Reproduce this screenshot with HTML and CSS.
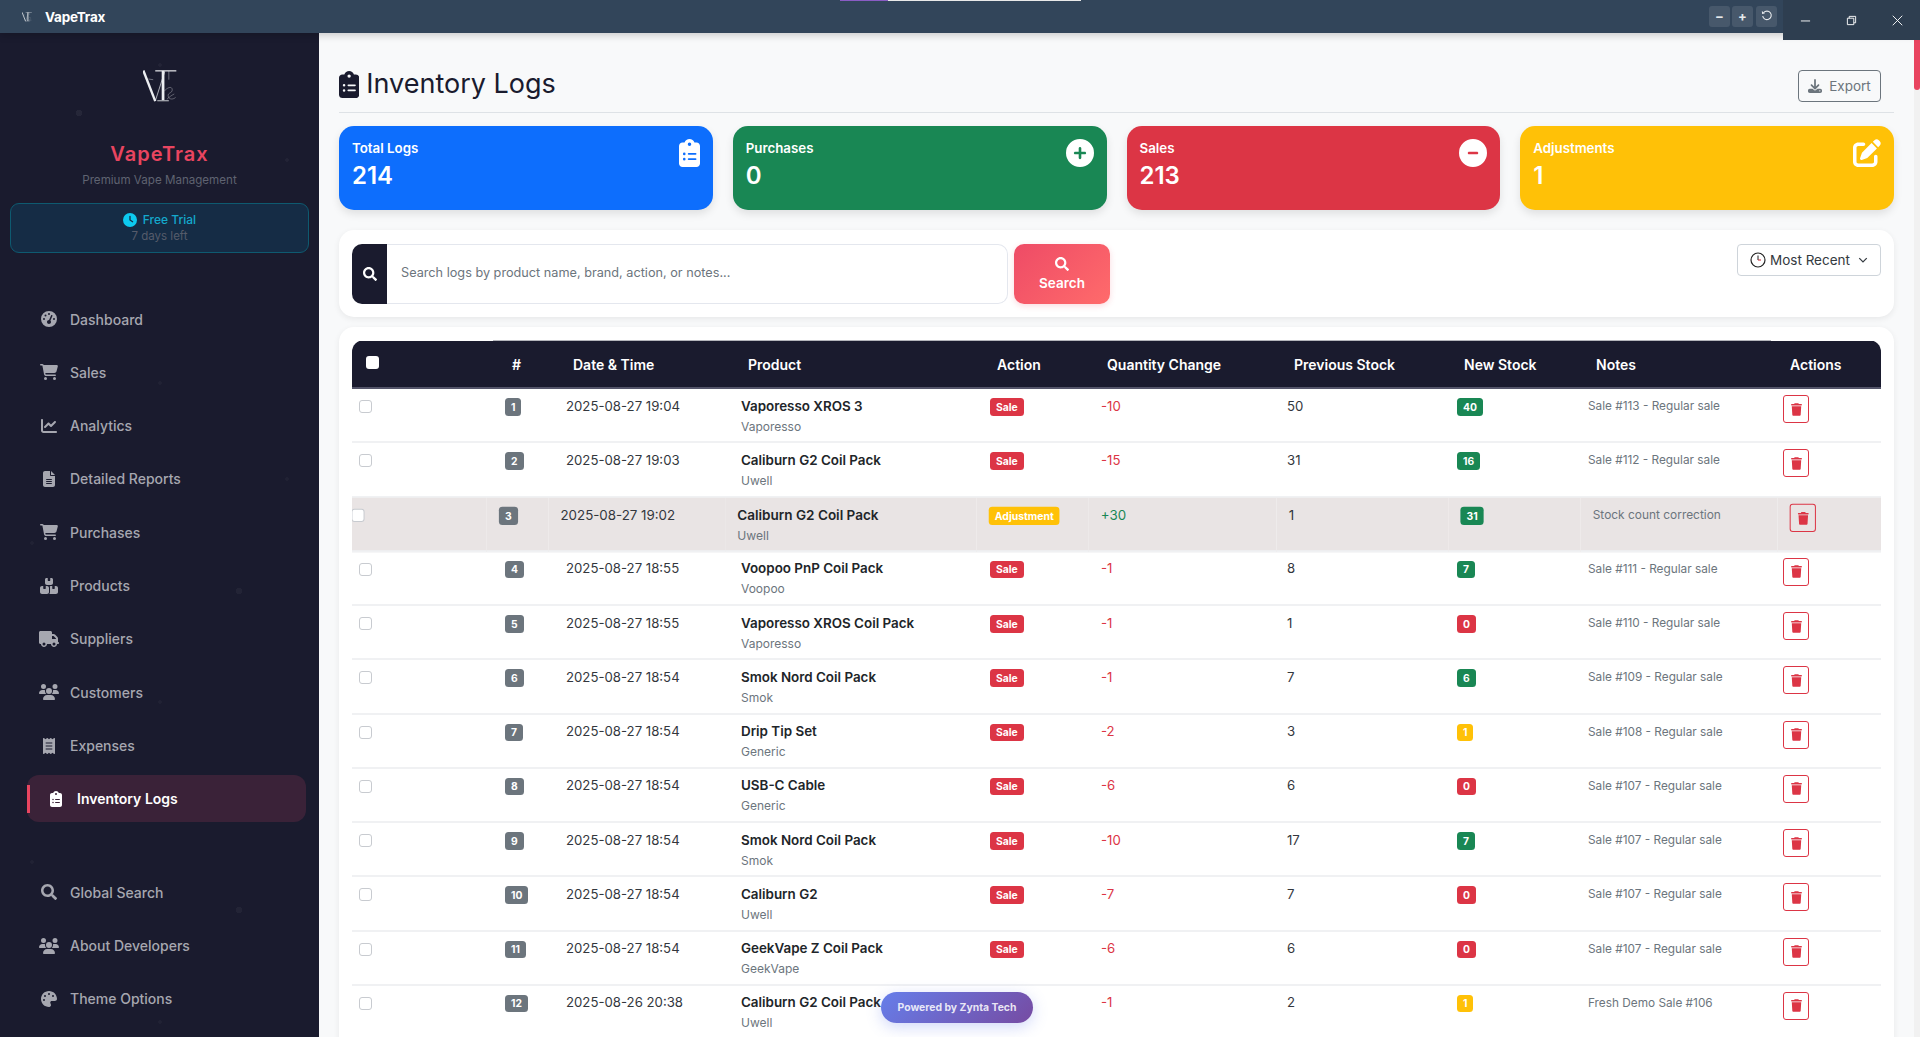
FILE: index.html
```html
<!DOCTYPE html>
<html lang="en">
<head>
<meta charset="utf-8">
<title>VapeTrax - Inventory Logs</title>
<link rel="stylesheet" href="styles.css">
</head>
<body>
<svg class="defs" aria-hidden="true"><defs>
<g id="logo" fill="none" stroke-linecap="butt">
<path d="M1 1L36 91" stroke="currentColor" stroke-width="7"/>
<path d="M36 91L64 4" stroke="currentColor" stroke-width="2"/>
<path d="M36 2H98" stroke="currentColor" stroke-width="3.5"/>
<path d="M59 2V88" stroke="currentColor" stroke-width="8"/>
<path d="M42 90H76" stroke="currentColor" stroke-width="2.5"/>
<path d="M76 2V28M16 26L30 28" stroke="currentColor" stroke-width="1.2"/>
<path d="M62 62C72 50 86 46 86 58C86 68 72 66 74 76C76 88 90 86 96 80M70 86C78 78 84 74 92 70" stroke="currentColor" stroke-width="1.5" opacity=".65"/>
</g>
<path id="clipboard" d="M192 0c-41.8 0-77.4 26.7-90.5 64H64C28.7 64 0 92.7 0 128V448c0 35.3 28.7 64 64 64H320c35.3 0 64-28.7 64-64V128c0-35.3-28.7-64-64-64H282.5C269.4 26.7 233.8 0 192 0zm0 64a32 32 0 1 1 0 64 32 32 0 1 1 0-64zM72 272a24 24 0 1 1 48 0 24 24 0 1 1 -48 0zm104-16H304c8.8 0 16 7.2 16 16s-7.2 16-16 16H176c-8.8 0-16-7.2-16-16s7.2-16 16-16zM72 368a24 24 0 1 1 48 0 24 24 0 1 1 -48 0zm88 0c0-8.8 7.2-16 16-16H304c8.8 0 16 7.2 16 16s-7.2 16-16 16H176c-8.8 0-16-7.2-16-16z"/>
<path id="trash" d="M135.2 17.7L128 32H32C14.3 32 0 46.3 0 64S14.3 96 32 96H416c17.7 0 32-14.3 32-32s-14.3-32-32-32H320l-7.2-14.3C307.4 6.8 296.3 0 284.2 0H163.8c-12.1 0-23.2 6.8-28.6 17.7zM416 128H32L53.2 467c1.6 25.3 22.6 45 47.9 45H346.9c25.3 0 46.3-19.7 47.9-45L416 128z"/>
<path id="search" d="M505 442.7L405.3 343c-4.5-4.5-10.6-7-17-7H372c27.6-35.3 44-79.7 44-128C416 93.1 322.9 0 208 0S0 93.1 0 208s93.1 208 208 208c48.3 0 92.7-16.4 128-44v16.3c0 6.4 2.5 12.5 7 17l99.7 99.7c9.4 9.4 24.6 9.4 33.9 0l28.3-28.3c9.4-9.4 9.4-24.6.1-34zM208 336c-70.7 0-128-57.2-128-128 0-70.7 57.2-128 128-128 70.7 0 128 57.2 128 128 0 70.7-57.2 128-128 128z"/>
<path id="cart" d="M0 24C0 10.7 10.7 0 24 0H69.5c22 0 41.5 12.8 50.6 32h411c26.3 0 45.5 25 38.6 50.4l-41 152.3c-8.5 31.4-37 53.3-69.5 53.3H170.7l5.4 28.5c2.2 11.3 12.1 19.5 23.6 19.5H488c13.3 0 24 10.7 24 24s-10.7 24-24 24H199.7c-34.6 0-64.3-24.6-70.7-58.5L77.4 54.5c-.7-3.8-4-6.5-7.9-6.5H24C10.7 48 0 37.3 0 24zM128 464a48 48 0 1 1 96 0 48 48 0 1 1 -96 0zm336-48a48 48 0 1 1 0 96 48 48 0 1 1 0-96z"/>
<path id="plus" d="M256 512A256 256 0 1 0 256 0a256 256 0 1 0 0 512zM232 344V280H168c-13.3 0-24-10.7-24-24s10.7-24 24-24h64V168c0-13.3 10.7-24 24-24s24 10.7 24 24v64h64c13.3 0 24 10.7 24 24s-10.7 24-24 24H280v64c0 13.3-10.7 24-24 24s-24-10.7-24-24z"/>
<path id="minus" d="M256 512A256 256 0 1 0 256 0a256 256 0 1 0 0 512zM184 232H328c13.3 0 24 10.7 24 24s-10.7 24-24 24H184c-13.3 0-24-10.7-24-24s10.7-24 24-24z"/>
<path id="edit" d="M471.6 21.7c-21.9-21.9-57.3-21.9-79.2 0L362.3 51.7l97.9 97.9 30.1-30.1c21.9-21.9 21.9-57.3 0-79.2L471.6 21.7zm-299.2 220c-6.1 6.1-10.8 13.6-13.5 21.9l-29.6 88.8c-2.9 8.6-.6 18.1 5.8 24.6s15.9 8.7 24.6 5.8l88.8-29.6c8.2-2.7 15.7-7.4 21.9-13.5L437.7 172.3 339.7 74.3 172.4 241.7zM96 64C43 64 0 107 0 160V416c0 53 43 96 96 96H352c53 0 96-43 96-96V320c0-17.7-14.3-32-32-32s-32 14.3-32 32v96c0 17.7-14.3 32-32 32H96c-17.7 0-32-14.3-32-32V160c0-17.7 14.3-32 32-32h96c17.7 0 32-14.3 32-32s-14.3-32-32-32H96z"/>
<path id="download" d="M288 32c0-17.7-14.3-32-32-32s-32 14.3-32 32V274.7l-73.4-73.4c-12.5-12.5-32.8-12.5-45.3 0s-12.5 32.8 0 45.3l128 128c12.5 12.5 32.8 12.5 45.3 0l128-128c12.5-12.5 12.5-32.8 0-45.3s-32.8-12.5-45.3 0L288 274.7V32zM64 352c-35.3 0-64 28.7-64 64v32c0 35.3 28.7 64 64 64H448c35.3 0 64-28.7 64-64V416c0-35.3-28.7-64-64-64H346.5l-45.3 45.3c-25 25-65.5 25-90.5 0L165.5 352H64zm368 56a24 24 0 1 1 0 48 24 24 0 1 1 0-48z"/>
<path id="clock" d="M256 0a256 256 0 1 1 0 512A256 256 0 1 1 256 0zM232 120V256c0 8 4 15.5 10.7 20l96 64c11 7.4 25.9 4.4 33.3-6.7s4.4-25.9-6.7-33.3L280 243.2V120c0-13.3-10.7-24-24-24s-24 10.7-24 24z"/>
<path id="gauge" d="M0 256a256 256 0 1 1 512 0A256 256 0 1 1 0 256zM288 96a32 32 0 1 0 -64 0 32 32 0 1 0 64 0zM256 416c35.3 0 64-28.7 64-64c0-17.4-6.9-33.1-18.1-44.6L366 161.7c5.3-12.1-.2-26.3-12.3-31.6s-26.3 .2-31.6 12.3L257.9 288c-.6 0-1.3 0-1.9 0c-35.3 0-64 28.7-64 64s28.7 64 64 64zM176 144a32 32 0 1 0 -64 0 32 32 0 1 0 64 0zM96 288a32 32 0 1 0 0-64 32 32 0 1 0 0 64zm352-32a32 32 0 1 0 -64 0 32 32 0 1 0 64 0z"/>
<path id="chart" d="M64 64c0-17.7-14.3-32-32-32S0 46.3 0 64V400c0 44.2 35.8 80 80 80H480c17.7 0 32-14.3 32-32s-14.3-32-32-32H80c-8.8 0-16-7.2-16-16V64zm406.6 86.6c12.5-12.5 12.5-32.8 0-45.3s-32.8-12.5-45.3 0L320 210.7l-57.4-57.4c-12.5-12.5-32.8-12.5-45.3 0l-112 112c-12.5 12.5-12.5 32.8 0 45.3s32.8 12.5 45.3 0L240 221.3l57.4 57.4c12.5 12.5 32.8 12.5 45.3 0l128-128z"/>
<path id="file" d="M64 0C28.7 0 0 28.7 0 64V448c0 35.3 28.7 64 64 64H320c35.3 0 64-28.7 64-64V160H256c-17.7 0-32-14.3-32-32V0H64zM256 0V128H384L256 0zM112 256H272c8.8 0 16 7.2 16 16s-7.2 16-16 16H112c-8.8 0-16-7.2-16-16s7.2-16 16-16zm0 64H272c8.8 0 16 7.2 16 16s-7.2 16-16 16H112c-8.8 0-16-7.2-16-16s7.2-16 16-16zm0 64H272c8.8 0 16 7.2 16 16s-7.2 16-16 16H112c-8.8 0-16-7.2-16-16s7.2-16 16-16z"/>
<path id="boxes" d="M248 0H208c-26.5 0-48 21.5-48 48V160c0 35.3 28.7 64 64 64H352c35.3 0 64-28.7 64-64V48c0-26.5-21.5-48-48-48H328V80c0 8.8-7.2 16-16 16H264c-8.8 0-16-7.2-16-16V0zM64 256c-35.3 0-64 28.7-64 64V448c0 35.3 28.7 64 64 64H224c35.3 0 64-28.7 64-64V320c0-35.3-28.7-64-64-64H184v80c0 8.8-7.2 16-16 16H120c-8.8 0-16-7.2-16-16V256H64zM352 512H512c35.3 0 64-28.7 64-64V320c0-35.3-28.7-64-64-64H472v80c0 8.8-7.2 16-16 16H408c-8.8 0-16-7.2-16-16V256H352c-15 0-28.8 5.1-39.7 13.8C318.3 281 320 300 320 320V448c0 24-8 46-20 64z"/>
<path id="truck" d="M48 0C21.5 0 0 21.5 0 48V368c0 26.5 21.5 48 48 48H64c0 53 43 96 96 96s96-43 96-96H384c0 53 43 96 96 96s96-43 96-96h32c17.7 0 32-14.3 32-32s-14.3-32-32-32V288 256 237.3c0-17-6.7-33.3-18.7-45.3L512 114.7c-12-12-28.3-18.7-45.3-18.7H416V48c0-26.5-21.5-48-48-48H48zM416 160h50.7L544 237.3V256H416V160zM112 416a48 48 0 1 1 96 0 48 48 0 1 1 -96 0zm368-48a48 48 0 1 1 0 96 48 48 0 1 1 0-96z"/>
<path id="users" d="M144 0a80 80 0 1 1 0 160A80 80 0 1 1 144 0zM512 0a80 80 0 1 1 0 160A80 80 0 1 1 512 0zM0 298.7C0 239.8 47.8 192 106.7 192h42.7c15.9 0 31 3.5 44.6 9.7c-1.3 7.2-1.9 14.7-1.9 22.3c0 38.2 16.8 72.5 43.3 96c-.2 0-.4 0-.7 0H21.3C9.6 320 0 310.4 0 298.7zM405.3 320c-.2 0-.4 0-.7 0c26.6-23.5 43.3-57.8 43.3-96c0-7.6-.7-15-1.9-22.3c13.6-6.3 28.7-9.7 44.6-9.7h42.7C592.2 192 640 239.8 640 298.7c0 11.8-9.6 21.3-21.3 21.3H405.3zM224 224a96 96 0 1 1 192 0 96 96 0 1 1 -192 0zM128 485.3C128 411.7 187.7 352 261.3 352H378.7C452.3 352 512 411.7 512 485.3c0 14.7-11.9 26.7-26.7 26.7H154.7c-14.7 0-26.7-11.9-26.7-26.7z"/>
<path id="receipt" d="M14 2.2C22.5-1.7 32.5-.3 39.6 5.8L80 40.4 120.4 5.8c9-7.7 22.3-7.7 31.2 0L192 40.4 232.4 5.8c9-7.7 22.3-7.7 31.2 0L304 40.4 344.4 5.8c7.1-6.1 17.1-7.5 25.6-3.6s14 12.4 14 21.8V488c0 9.4-5.5 17.9-14 21.8s-18.5 2.5-25.6-3.6L304 471.6l-40.4 34.6c-9 7.7-22.3 7.7-31.2 0L192 471.6l-40.4 34.6c-9 7.7-22.3 7.7-31.2 0L80 471.6 39.6 506.2c-7.1 6.1-17.1 7.5-25.6 3.6S0 497.4 0 488V24C0 14.6 5.5 6.1 14 2.2zM96 144c-8.8 0-16 7.2-16 16s7.2 16 16 16H288c8.8 0 16-7.2 16-16s-7.2-16-16-16H96zM80 352c0 8.8 7.2 16 16 16H288c8.8 0 16-7.2 16-16s-7.2-16-16-16H96c-8.8 0-16 7.2-16 16zM96 240c-8.8 0-16 7.2-16 16s7.2 16 16 16H288c8.8 0 16-7.2 16-16s-7.2-16-16-16H96z"/>
<path id="palette" d="M512 256c0 .9 0 1.8 0 2.7c-.4 36.5-33.6 61.3-70.1 61.3H344c-26.5 0-48 21.5-48 48c0 3.4 .4 6.7 1 9.9c2.1 10.2 6.5 20 10.8 29.9c6.1 13.8 12.1 27.5 12.1 42c0 31.8-21.6 60.7-53.4 62c-3.5 .1-7 .2-10.6 .2C114.6 512 0 397.4 0 256S114.6 0 256 0S512 114.6 512 256zM128 288a32 32 0 1 0 -64 0 32 32 0 1 0 64 0zm0-96a32 32 0 1 0 0-64 32 32 0 1 0 0 64zM288 96a32 32 0 1 0 -64 0 32 32 0 1 0 64 0zm96 96a32 32 0 1 0 0-64 32 32 0 1 0 0 64z"/>
</defs></svg>

<div class="app">
  <header class="titlebar">
    <svg class="title-logo" viewBox="0 0 100 96"><use href="#logo"/></svg>
    <span class="title-name">VapeTrax</span>
    <div class="load-strip"><span class="load-done"></span><span class="load-rest"></span></div>
    <div class="zoom-btns">
      <button class="zoom-btn" type="button">−</button>
      <button class="zoom-btn" type="button">+</button>
      <button class="zoom-btn" type="button"><svg class="reset-ic" viewBox="0 0 14 14"><path d="M3 3.2A5 5 0 1 1 2 7" fill="none" stroke="currentColor" stroke-width="1.3"/><path d="M1 1.2L1.2 4.6L4.6 4.2Z" fill="currentColor"/></svg></button>
    </div>
    <div class="win-btns">
      <span class="win-btn"><svg viewBox="0 0 12 12"><path d="M1 6.5H11" stroke="currentColor"/></svg></span>
      <span class="win-btn"><svg viewBox="0 0 12 12"><path d="M1.5 3.5H8.5V10.5H1.5ZM3.5 3.5V1.5H10.5V8.5H8.5" fill="none" stroke="currentColor"/></svg></span>
      <span class="win-btn"><svg viewBox="0 0 12 12"><path d="M.8.8L11.2 11.2M11.2.8L.8 11.2" stroke="currentColor"/></svg></span>
    </div>
  </header>

  <div class="body-row">
    <aside class="sidebar">
      <div class="brand">
        <svg class="brand-logo" viewBox="0 0 100 96"><use href="#logo"/></svg>
        <div class="brand-name">VapeTrax</div>
        <div class="brand-sub">Premium Vape Management</div>
      </div>
      <div class="trial">
        <div class="trial-top"><svg class="trial-ic" viewBox="0 0 512 512"><use href="#clock"/></svg>Free Trial</div>
        <div class="trial-days">7 days left</div>
      </div>
      <nav class="nav">
        <a class="nav-item"><span class="nav-ic"><svg viewBox="0 0 512 512"><use href="#gauge"/></svg></span>Dashboard</a>
        <a class="nav-item"><span class="nav-ic"><svg viewBox="0 0 576 512"><use href="#cart"/></svg></span>Sales</a>
        <a class="nav-item"><span class="nav-ic"><svg viewBox="0 0 512 512"><use href="#chart"/></svg></span>Analytics</a>
        <a class="nav-item"><span class="nav-ic"><svg viewBox="0 0 384 512"><use href="#file"/></svg></span>Detailed Reports</a>
        <a class="nav-item"><span class="nav-ic"><svg viewBox="0 0 576 512"><use href="#cart"/></svg></span>Purchases</a>
        <a class="nav-item"><span class="nav-ic"><svg viewBox="0 0 576 512"><use href="#boxes"/></svg></span>Products</a>
        <a class="nav-item"><span class="nav-ic"><svg viewBox="0 0 640 512"><use href="#truck"/></svg></span>Suppliers</a>
        <a class="nav-item"><span class="nav-ic"><svg viewBox="0 0 640 512"><use href="#users"/></svg></span>Customers</a>
        <a class="nav-item"><span class="nav-ic"><svg viewBox="0 0 384 512"><use href="#receipt"/></svg></span>Expenses</a>
        <a class="nav-item active"><span class="nav-ic"><svg viewBox="0 0 384 512"><use href="#clipboard"/></svg></span>Inventory Logs</a>
        <a class="nav-item nav-break"><span class="nav-ic"><svg viewBox="0 0 512 512"><use href="#search"/></svg></span>Global Search</a>
        <a class="nav-item"><span class="nav-ic"><svg viewBox="0 0 640 512"><use href="#users"/></svg></span>About Developers</a>
        <a class="nav-item"><span class="nav-ic"><svg viewBox="0 0 512 512"><use href="#palette"/></svg></span>Theme Options</a>
      </nav>
    </aside>

    <main class="main">
      <div class="page-head">
        <h1 class="page-title"><svg class="title-ic" viewBox="0 0 384 512"><use href="#clipboard"/></svg>Inventory Logs</h1>
        <button class="export-btn" type="button"><svg class="export-ic" viewBox="0 0 512 512"><use href="#download"/></svg>Export</button>
      </div>

      <section class="stats">
        <div class="stat stat-blue"><div><div class="stat-label">Total Logs</div><div class="stat-num">214</div></div><svg class="stat-ic" viewBox="0 0 384 512"><use href="#clipboard"/></svg></div>
        <div class="stat stat-green"><div><div class="stat-label">Purchases</div><div class="stat-num">0</div></div><svg class="stat-ic" viewBox="0 0 512 512"><use href="#plus"/></svg></div>
        <div class="stat stat-red"><div><div class="stat-label">Sales</div><div class="stat-num">213</div></div><svg class="stat-ic" viewBox="0 0 512 512"><use href="#minus"/></svg></div>
        <div class="stat stat-yellow"><div><div class="stat-label">Adjustments</div><div class="stat-num">1</div></div><svg class="stat-ic" viewBox="0 0 512 512"><use href="#edit"/></svg></div>
      </section>

      <section class="search-card">
        <div class="search-left">
          <div class="search-group">
            <span class="search-addon"><svg class="search-ic" viewBox="0 0 512 512"><use href="#search"/></svg></span>
            <input class="search-input" type="text" placeholder="Search logs by product name, brand, action, or notes...">
          </div>
          <button class="search-btn" type="button"><svg class="search-ic" viewBox="0 0 512 512"><use href="#search"/></svg>Search</button>
        </div>
        <div class="sort">
          <svg class="sort-ic" viewBox="0 0 16 16"><circle cx="8" cy="8" r="7" fill="#fff" stroke="#222" stroke-width="1.2"/><path d="M8 3.5V8" stroke="#222" stroke-width="1"/><path d="M8 8H11" stroke="#c8202c" stroke-width="1"/></svg>
          <span>Most Recent</span>
          <svg class="sort-chev" viewBox="0 0 16 16"><path d="M2 5l6 6 6-6" fill="none" stroke="#343a40" stroke-width="2"/></svg>
        </div>
      </section>

      <section class="table-card">
        <div class="table-wrap">
          <table class="logs">
            <colgroup><col class="c-check"><col class="c-num"><col class="c-date"><col class="c-prod"><col class="c-act"><col class="c-qty"><col class="c-prev"><col class="c-new"><col class="c-notes"><col class="c-btn"></colgroup>
            <thead><tr><th><span class="check check-head"></span></th><th>#</th><th>Date &amp; Time</th><th>Product</th><th>Action</th><th class="th-qty">Quantity Change</th><th>Previous Stock</th><th>New Stock</th><th class="th-notes">Notes</th><th>Actions</th></tr></thead>
            <tbody>
              <tr><td><span class="check"></span></td><td><span class="badge b-gray">1</span></td><td>2025-08-27 19:04</td><td><div class="prod">Vaporesso XROS 3</div><div class="maker">Vaporesso</div></td><td><span class="badge b-red">Sale</span></td><td class="neg">-10</td><td>50</td><td><span class="badge b-green">40</span></td><td class="note">Sale #113 - Regular sale</td><td><button class="del" type="button"><svg viewBox="0 0 448 512"><use href="#trash"/></svg></button></td></tr>
              <tr><td><span class="check"></span></td><td><span class="badge b-gray">2</span></td><td>2025-08-27 19:03</td><td><div class="prod">Caliburn G2 Coil Pack</div><div class="maker">Uwell</div></td><td><span class="badge b-red">Sale</span></td><td class="neg">-15</td><td>31</td><td><span class="badge b-green">16</span></td><td class="note">Sale #112 - Regular sale</td><td><button class="del" type="button"><svg viewBox="0 0 448 512"><use href="#trash"/></svg></button></td></tr>
              <tr class="hovered"><td><span class="check"></span></td><td><span class="badge b-gray">3</span></td><td>2025-08-27 19:02</td><td><div class="prod">Caliburn G2 Coil Pack</div><div class="maker">Uwell</div></td><td><span class="badge b-yellow">Adjustment</span></td><td class="pos">+30</td><td>1</td><td><span class="badge b-green">31</span></td><td class="note">Stock count correction</td><td><button class="del" type="button"><svg viewBox="0 0 448 512"><use href="#trash"/></svg></button></td></tr>
              <tr><td><span class="check"></span></td><td><span class="badge b-gray">4</span></td><td>2025-08-27 18:55</td><td><div class="prod">Voopoo PnP Coil Pack</div><div class="maker">Voopoo</div></td><td><span class="badge b-red">Sale</span></td><td class="neg">-1</td><td>8</td><td><span class="badge b-green">7</span></td><td class="note">Sale #111 - Regular sale</td><td><button class="del" type="button"><svg viewBox="0 0 448 512"><use href="#trash"/></svg></button></td></tr>
              <tr><td><span class="check"></span></td><td><span class="badge b-gray">5</span></td><td>2025-08-27 18:55</td><td><div class="prod">Vaporesso XROS Coil Pack</div><div class="maker">Vaporesso</div></td><td><span class="badge b-red">Sale</span></td><td class="neg">-1</td><td>1</td><td><span class="badge b-red">0</span></td><td class="note">Sale #110 - Regular sale</td><td><button class="del" type="button"><svg viewBox="0 0 448 512"><use href="#trash"/></svg></button></td></tr>
              <tr><td><span class="check"></span></td><td><span class="badge b-gray">6</span></td><td>2025-08-27 18:54</td><td><div class="prod">Smok Nord Coil Pack</div><div class="maker">Smok</div></td><td><span class="badge b-red">Sale</span></td><td class="neg">-1</td><td>7</td><td><span class="badge b-green">6</span></td><td class="note">Sale #109 - Regular sale</td><td><button class="del" type="button"><svg viewBox="0 0 448 512"><use href="#trash"/></svg></button></td></tr>
              <tr><td><span class="check"></span></td><td><span class="badge b-gray">7</span></td><td>2025-08-27 18:54</td><td><div class="prod">Drip Tip Set</div><div class="maker">Generic</div></td><td><span class="badge b-red">Sale</span></td><td class="neg">-2</td><td>3</td><td><span class="badge b-yellow">1</span></td><td class="note">Sale #108 - Regular sale</td><td><button class="del" type="button"><svg viewBox="0 0 448 512"><use href="#trash"/></svg></button></td></tr>
              <tr><td><span class="check"></span></td><td><span class="badge b-gray">8</span></td><td>2025-08-27 18:54</td><td><div class="prod">USB-C Cable</div><div class="maker">Generic</div></td><td><span class="badge b-red">Sale</span></td><td class="neg">-6</td><td>6</td><td><span class="badge b-red">0</span></td><td class="note">Sale #107 - Regular sale</td><td><button class="del" type="button"><svg viewBox="0 0 448 512"><use href="#trash"/></svg></button></td></tr>
              <tr><td><span class="check"></span></td><td><span class="badge b-gray">9</span></td><td>2025-08-27 18:54</td><td><div class="prod">Smok Nord Coil Pack</div><div class="maker">Smok</div></td><td><span class="badge b-red">Sale</span></td><td class="neg">-10</td><td>17</td><td><span class="badge b-green">7</span></td><td class="note">Sale #107 - Regular sale</td><td><button class="del" type="button"><svg viewBox="0 0 448 512"><use href="#trash"/></svg></button></td></tr>
              <tr><td><span class="check"></span></td><td><span class="badge b-gray">10</span></td><td>2025-08-27 18:54</td><td><div class="prod">Caliburn G2</div><div class="maker">Uwell</div></td><td><span class="badge b-red">Sale</span></td><td class="neg">-7</td><td>7</td><td><span class="badge b-red">0</span></td><td class="note">Sale #107 - Regular sale</td><td><button class="del" type="button"><svg viewBox="0 0 448 512"><use href="#trash"/></svg></button></td></tr>
              <tr><td><span class="check"></span></td><td><span class="badge b-gray">11</span></td><td>2025-08-27 18:54</td><td><div class="prod">GeekVape Z Coil Pack</div><div class="maker">GeekVape</div></td><td><span class="badge b-red">Sale</span></td><td class="neg">-6</td><td>6</td><td><span class="badge b-red">0</span></td><td class="note">Sale #107 - Regular sale</td><td><button class="del" type="button"><svg viewBox="0 0 448 512"><use href="#trash"/></svg></button></td></tr>
              <tr><td><span class="check"></span></td><td><span class="badge b-gray">12</span></td><td>2025-08-26 20:38</td><td><div class="prod">Caliburn G2 Coil Pack</div><div class="maker">Uwell</div></td><td><span class="badge b-red">Sale</span></td><td class="neg">-1</td><td>2</td><td><span class="badge b-yellow">1</span></td><td class="note">Fresh Demo Sale #106</td><td><button class="del" type="button"><svg viewBox="0 0 448 512"><use href="#trash"/></svg></button></td></tr>
            </tbody>
          </table>
        </div>
      </section>
    </main>

    <div class="scrollbar"><div class="scroll-thumb"></div></div>
  </div>
  <div class="powered">Powered by Zynta Tech</div>
</div>
</body>
</html>
```

FILE: styles.css
```css
* { box-sizing: border-box; }
html, body { margin: 0; height: 100%; }
body { font-family: "Inter", "Liberation Sans", sans-serif; color: #212529; background: #f8f9fa; overflow: hidden; }
.defs { position: absolute; width: 0; height: 0; }
svg { fill: currentColor; display: block; }
button { font-family: inherit; }

.app { height: 100vh; display: flex; flex-direction: column; position: relative; overflow: hidden; }

/* title bar */
.titlebar { flex: 0 0 33px; position: relative; z-index: 3; display: flex; align-items: center; padding-left: 22px; background: #32455a; box-shadow: 0 2px 8px rgba(0,0,0,.2); color: #fff; }
.title-logo { width: 10px; height: 10px; color: #fff; }
.title-name { margin-left: 13px; font-size: 13.5px; font-weight: 700; letter-spacing: -.2px; }
.load-strip { position: absolute; top: 0; left: 840px; height: 1px; display: flex; }
.load-done { width: 48px; background: #8a5cc4; }
.load-rest { width: 193px; background: #e9e9e9; }
.zoom-btns { margin-left: auto; margin-right: 143px; margin-top: -1px; display: flex; gap: 2px; }
.zoom-btn { width: 21px; height: 21px; padding: 0; border: 0; border-radius: 3px; background: #47586b; color: #e6e9ec; font-size: 13px; font-weight: 700; line-height: 21px; display: flex; align-items: center; justify-content: center; }
.zoom-btn + .zoom-btn + .zoom-btn { margin-left: 1px; }
.reset-ic { width: 12px; height: 12px; }
.win-btns { position: absolute; top: 0; right: 0; width: 137px; height: 40px; display: flex; background: #2e3e50; }
.win-btn { flex: 1; display: flex; align-items: center; justify-content: center; color: #fff; }
.win-btn svg { width: 11px; height: 11px; }

/* layout */
.body-row { flex: 1; min-height: 0; display: flex; }

/* sidebar */
.sidebar {
  flex: 0 0 319px; padding-top: 37px; color: #fff; background-color: #1a1b2e;
  background-image:
    radial-gradient(circle at 79px 80px, rgba(255,255,255,.05) 0 3px, transparent 3.5px),
    radial-gradient(circle at 160px 32px, rgba(255,255,255,.04) 0 1.5px, transparent 2px),
    radial-gradient(circle at 287px 127px, rgba(255,255,255,.04) 0 1.5px, transparent 2px),
    radial-gradient(circle at 32px 191px, rgba(255,255,255,.04) 0 1.5px, transparent 2px),
    radial-gradient(circle at 160px 350px, rgba(255,255,255,.03) 0 1.5px, transparent 2px),
    radial-gradient(circle at 287px 446px, rgba(255,255,255,.03) 0 1.5px, transparent 2px),
    radial-gradient(circle at 32px 510px, rgba(255,255,255,.03) 0 1.5px, transparent 2px),
    radial-gradient(circle at 239px 558px, rgba(255,255,255,.04) 0 3px, transparent 3.5px),
    radial-gradient(circle at 160px 669px, rgba(255,255,255,.03) 0 1.5px, transparent 2px),
    radial-gradient(circle at 287px 765px, rgba(255,255,255,.03) 0 1.5px, transparent 2px),
    radial-gradient(circle at 32px 829px, rgba(255,255,255,.03) 0 1.5px, transparent 2px),
    radial-gradient(circle at 239px 877px, rgba(255,255,255,.04) 0 3px, transparent 3.5px),
    radial-gradient(circle at 160px 989px, rgba(255,255,255,.03) 0 1.5px, transparent 2px);
}
.brand { display: flex; flex-direction: column; align-items: center; }
.brand-logo { width: 34px; height: 33px; color: #eceef1; margin-bottom: 37px; }
.brand-name { font-size: 20px; line-height: 29px; font-weight: 600; letter-spacing: 1px; color: #e94560; }
.brand-sub { margin-top: 3px; font-size: 11.6px; line-height: 16px; color: #5f6371; }
.trial { margin: 15px 10px 0; height: 50px; padding-top: 7px; border: 1px solid #0e5a70; border-radius: 9px; background: #152c45; display: flex; flex-direction: column; align-items: center; }
.trial-top { display: flex; align-items: center; gap: 6px; font-size: 12px; line-height: 17px; font-weight: 500; color: #14a9cc; }
.trial-ic { width: 14px; height: 14px; color: #0dcaf0; }
.trial-days { font-size: 11.5px; line-height: 17px; color: #565c6b; }
.nav { margin-top: 42.5px; display: flex; flex-direction: column; gap: 6.33px; }
.nav-item { height: 47px; margin: 0 20px; padding-left: 20px; display: flex; align-items: center; position: relative; border-radius: 12px; font-size: 14px; font-weight: 500; color: #a6a7b0; }
.nav-ic { width: 17px; margin-right: 13px; display: flex; justify-content: center; flex: none; }
.nav-ic svg { height: 16px; width: auto; flex: none; }
.nav-break { margin-top: 40px; }
.nav-item.active { transform: translateX(7px); background: #3a2238; color: #fff; font-weight: 600; }
.nav-item.active::before { content: ""; position: absolute; left: 0; top: 10px; bottom: 9px; width: 3px; background: #e94560; }

/* main */
.main { flex: 1; min-width: 0; padding: 37px 20px 0; overflow: hidden; }
.page-head { height: 43px; display: flex; justify-content: space-between; align-items: flex-start; padding-right: 13px; border-bottom: 1px solid #dee2e6; }
.page-title { margin: -2px 0 0; display: flex; align-items: center; gap: 7px; height: 32px; font-size: 27px; line-height: 32px; font-weight: 400; color: #1a1b2e; }
.title-ic { height: 27px; width: auto; color: #1a1b2e; }
.export-btn { width: 83px; height: 32px; padding: 0; display: flex; align-items: center; justify-content: center; gap: 7px; background: transparent; border: 1px solid #6c757d; border-radius: 4px; color: #6c757d; font-size: 13.5px; }
.export-ic { width: 14px; height: 14px; }

.stats { margin-top: 13px; display: grid; grid-template-columns: repeat(4, 1fr); gap: 20px; }
.stat { height: 84px; padding: 13px; border-radius: 15px; color: #fff; display: flex; justify-content: space-between; box-shadow: 0 4px 8px rgba(0,0,0,.1); }
.stat-blue { background: #0d6efd; }
.stat-green { background: #198754; }
.stat-red { background: #dc3545; }
.stat-yellow { background: #ffc107; }
.stat-label { margin-top: 1px; font-size: 13.3px; line-height: 17px; font-weight: 600; }
.stat-num { margin-top: 3.5px; font-size: 24px; line-height: 29px; font-weight: 600; }
.stat-ic { height: 28px; width: auto; flex: none; }

.search-card { margin-top: 20px; height: 87px; padding: 14px 13px; background: #fff; border-radius: 15px; box-shadow: 0 2px 6px rgba(0,0,0,.07); display: flex; justify-content: space-between; align-items: flex-start; }
.search-left { display: flex; gap: 6px; }
.search-group { width: 656px; height: 60px; display: flex; }
.search-addon { flex: 0 0 35px; border-radius: 10px 0 0 10px; background: #1a1b2e; color: #fff; display: flex; align-items: center; justify-content: center; }
.search-ic { width: 14px; height: 14px; }
.search-input { flex: 1; min-width: 0; border: 1px solid #e4e7ee; border-left: 0; border-radius: 0 10px 10px 0; outline: 0; padding: 0 0 4px 14px; font-family: inherit; font-size: 12.7px; color: #212529; background: #fff; }
.search-input::placeholder { color: #6c757d; opacity: 1; }
.search-btn { width: 96px; height: 60px; padding: 0; border: 0; border-radius: 10px; background: linear-gradient(135deg, #ee4b66, #ff6b6b); color: #fff; font-size: 13.5px; font-weight: 600; line-height: 18px; display: flex; flex-direction: column; align-items: center; justify-content: center; gap: 3px; box-shadow: 0 2px 6px rgba(233,69,96,.2); }
.sort { width: 144px; height: 32px; padding: 0 12px 0 12px; display: flex; align-items: center; border: 1px solid #ced4da; border-radius: 4px; background: #fff; font-size: 13.5px; color: #343a40; }
.sort-ic { width: 16px; height: 16px; margin-right: 4px; flex: none; }
.sort-chev { width: 10px; height: 10px; margin-left: auto; flex: none; }

.table-card { margin-top: 10px; padding: 13px 13px 0; height: 800px; background: #fff; border-radius: 15px; box-shadow: 0 2px 6px rgba(0,0,0,.07); }
.table-wrap { padding-top: 1px; overflow: hidden; border-radius: 12px 12px 0 0; }
.logs { width: 1529px; table-layout: fixed; border-collapse: separate; border-spacing: 0; font-size: 13.2px; }
.c-check { width: 141px; } .c-num { width: 61px; } .c-date { width: 175px; } .c-prod { width: 249px; } .c-act { width: 111px; }
.c-qty { width: 186px; } .c-prev { width: 170px; } .c-new { width: 131px; } .c-notes { width: 195px; } .c-btn { width: 110px; }
.logs th { height: 48px; padding: 0 0 0 19px; background: #1a1b2e; color: #fff; font-size: 14px; font-weight: 600; text-align: left; border-bottom: 2px solid #54556a; box-shadow: 0 -1px 0 #b4b5bb; }
.logs th:first-child { padding-left: 14px; box-shadow: none; }
.logs th:last-child { box-shadow: none; }
.logs th.th-qty { padding-left: 18px; }
.logs th.th-notes { padding-left: 20px; }
.logs td { height: 54.25px; padding: 6.5px 0 0 12px; vertical-align: top; line-height: 21px; font-weight: 400; color: #33373d; border-bottom: 2px solid #f0f1f3; }
.logs td:first-child { padding-left: 7px; padding-top: 11px; line-height: 0; }
.check { display: block; width: 13px; height: 13px; border: 1px solid #c8cbd0; border-radius: 3px; background: #fff; }
.check-head { border: 0; margin-top: -3px; }
.hovered { transform: scale(1.01); }
.hovered td { background: #e9e4e4; }
.prod { font-size: 13.4px; font-weight: 600; color: #212529; }
.maker { font-size: 12px; line-height: 20px; color: #6c757d; }
.logs td.neg { color: #dc3545; }
.logs td.pos { color: #198754; }
.logs td.note { padding-top: 7px; font-size: 11.8px; color: #6c757d; }
.badge { display: inline-block; margin-top: 2.5px; padding: 3.5px 6px; border-radius: 3.5px; font-size: 10.3px; line-height: 10.5px; font-weight: 700; color: #fff; vertical-align: top; }
.b-gray { background: #6c757d; }
.b-red { background: #dc3545; }
.b-green { background: #198754; }
.b-yellow { background: #ffc107; }
.del { width: 26px; height: 28px; margin-top: -.5px; padding: 0; display: flex; align-items: center; justify-content: center; background: transparent; border: 1px solid #dc3545; border-radius: 3px; color: #dc3545; }
.del svg { width: 11px; height: 13px; }

/* scrollbar */
.scrollbar { flex: 0 0 6px; padding-top: 7px; background: #f1f1f1; }
.scroll-thumb { height: 50px; border-radius: 0 0 3px 3px; background: #e94560; }

.powered { position: absolute; left: 881px; top: 992px; width: 152px; height: 31px; display: flex; align-items: center; justify-content: center; border-radius: 16px; background: linear-gradient(135deg, #667eea, #764ba2); color: rgba(255,255,255,.85); font-size: 10.4px; font-weight: 700; box-shadow: 0 4px 15px rgba(102,126,234,.3); z-index: 4; }
```
